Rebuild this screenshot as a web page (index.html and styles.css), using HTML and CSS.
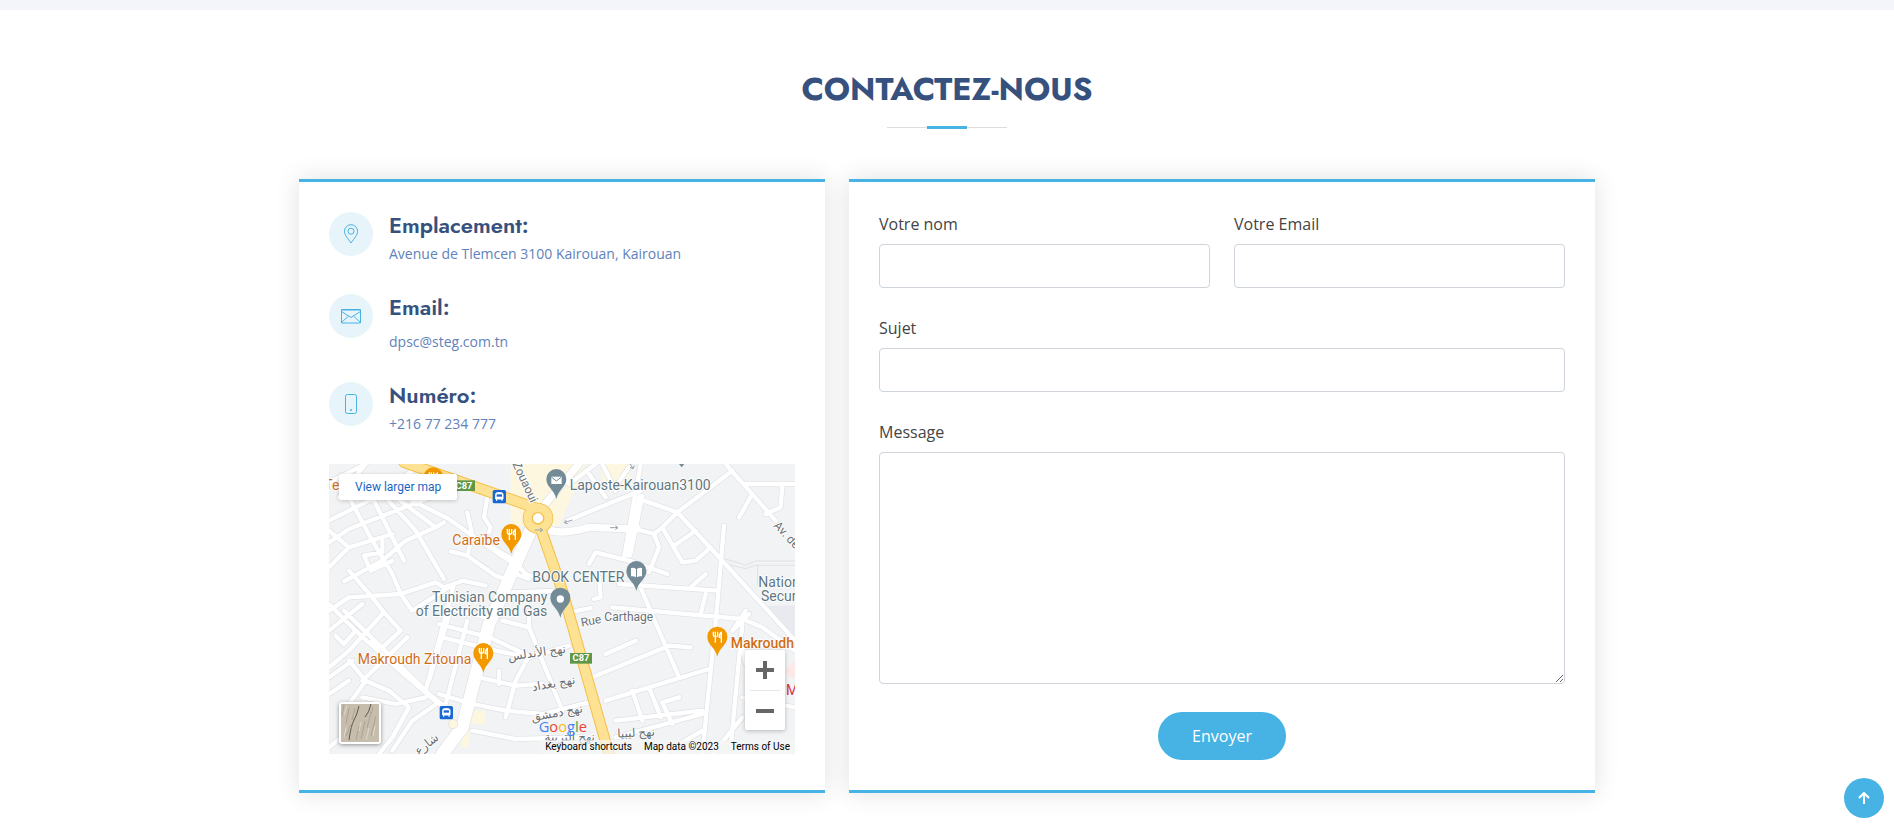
FILE: index.html
```html
<!DOCTYPE html>
<html lang="fr">
<head>
<meta charset="utf-8">
<meta name="viewport" content="width=device-width, initial-scale=1">
<title>Contactez-nous</title>
<link rel="stylesheet" href="styles.css">
</head>
<body>
<div class="band"></div>
<section class="contact">
  <header class="section-title"><h2>Contactez-nous</h2></header>
  <div class="columns">
    <div class="card info">
      <div class="info-item">
        <span class="info-icon"><svg viewBox="0 0 20 20"><path d="M10 19C7 14.500 3.500 11.500 3.500 7.200a6.500 6.500 0 0 1 13 0C16.500 11.500 13 14.500 10 19z"/><circle cx="10" cy="7.200" r="3"/></svg></span>
        <div><h3>Emplacement:</h3><p>Avenue de Tlemcen 3100 Kairouan, Kairouan</p></div>
      </div>
      <div class="info-item mail">
        <span class="info-icon"><svg viewBox="0 0 20 20"><path d="M.5 3.500h19v13.500H.5zM.5 5.500l9.500 6 9.500-6M.5 16.500l7-6.500M19.500 16.500l-7-6.500M1 4h18"/></svg></span>
        <div><h3>Email:</h3><p>dpsc@steg.com.tn</p></div>
      </div>
      <div class="info-item">
        <span class="info-icon"><svg viewBox="0 0 20 20"><rect x="4.500" y=".5" width="11" height="19" rx="2"/><circle class="dot" cx="10" cy="16" r="1"/></svg></span>
        <div><h3>Numéro:</h3><p>+216 77 234 777</p></div>
      </div>
      <div class="map">
        <svg class="map-canvas" viewBox="0 0 1398 870" preserveAspectRatio="xMidYMid slice" role="img" aria-label="Kairouan">
          <defs>
            <g id="roads">
              <path d="M110 0L30 100M0 55L110 0M0 170L120 110L250 20M0 235L60 195L200 140L330 90M60 100L130 230L190 330L215 390M130 100L225 290M170 100L260 200L345 345M200 100L320 190L345 175M250 110L360 165L430 215L415 275L500 335L530 345M0 200L60 250L190 210M0 310L60 250M45 352L160 290L230 230L320 190M105 275L125 320L190 290M160 220L160 265L105 275M0 440L60 400L215 390L320 355L345 370L375 360M60 320L130 400L165 445M0 420L80 500L190 600L330 720M45 440L300 690L350 730M0 610L60 560L165 445M0 500L100 420M80 500L45 540L20 515M165 445L215 500L150 560L130 530M0 640L70 590M100 700L200 720L290 700M60 590L110 650L180 680L240 730L190 820L150 870M110 650L60 720M235 520L100 650M330 715L250 770L190 860M0 690L60 650M0 850L60 800"/>
              <path d="M215 390L250 440L375 360L400 350L470 365M375 360L290 680M415 275L365 262M415 145L430 215L550 285L590 330L640 345M475 100L465 160L485 190L480 205M430 215L540 290M360 455L300 650M415 470L350 720M330 480L480 520L600 575M350 430L470 460M340 520L500 560L600 580L720 545M520 470L600 490L600 440M600 490L660 640L700 740M600 575L560 650L530 760M450 640L560 665L640 660M510 660V620M430 720L530 740L640 750L780 715M330 690L430 720M430 800L560 825L760 820M720 445L785 432M550 385L690 380M560 330L600 345"/>
              <path d="M715 170L860 110L935 80M935 0L885 280M945 110L1045 145L1210 20M780 30L830 100M820 0L860 80M865 60L900 10M800 0L720 60M1045 145L1180 290L1398 530M920 195L975 210L1000 190L1045 145M975 210L990 250L960 325M1000 190L1060 295L1100 290L1145 250M1035 245L1100 200M1185 185L1165 420L1120 870M1190 0L1340 170M1250 60H1398M1360 60L1355 130L1310 150M1270 90L1230 160M780 300L800 265L900 290L1015 330M870 360L1165 380M1085 370L1130 330M935 370L960 430L1050 640M850 430L1240 465L1300 490L1398 560M1130 390L1115 450M810 340L815 400L795 405M830 570L920 530M790 640L1020 545L1085 550M830 710L1140 615M860 820L1120 750M910 680L940 770M960 670L995 760M1050 700L1000 715L1030 780M860 770L1120 740M1240 480L1205 850M1250 440L1210 500L1260 450M1240 700L1398 730M1240 760L1150 870M1000 870L1120 800M1240 540L1250 600"/>
            </g>
            <path id="streets" d="M640 130L750 0M650 195Q700 215 780 190L925 195M935 100L900 270"/>
            <g id="pin"><path d="M0 55C-7 25-30 20-30-5a30 30 0 0 1 60 0C30 20 7 25 0 55z"/></g>
            <g id="fork"><use href="#pin" fill="#f29900"/><path d="M-12-20v11q0 4 4 4h5q4 0 4-4v-11M-6-20V13M12 13V-18q-6 3-6 15h6" fill="none" stroke="#fff" stroke-width="4"/></g>
            <g id="bus"><rect x="-20" y="-20" width="40" height="40" rx="5" fill="#1967d2"/><path d="M-11 7V-7q0-5 5-5H6q5 0 5 5V7zM-8 7v6M8 7v6" fill="#fff" stroke="#fff" stroke-width="3"/><path d="M-8-7H8V0H-8z" fill="#1967d2"/></g>
            <g id="route"><rect x="-33" y="-16" width="66" height="32" fill="#5f9747"/><text class="shield" text-anchor="middle" y="9">C87</text></g>
          </defs>
          <path fill="#f1f3f4" d="M0 0h1398v870H0z"/>
          <path fill="#e8eaf0" d="M1310 425h88v90z"/>
          <path fill="none" stroke="#dfe1e5" stroke-width="3" d="M1190 285l60 18 30-12h118M1190 300l60 14 30-10h118M1286 304v60"/>
          <path fill="#fef7e0" d="M545 0h225L690 185H545zM820 0h90l-20 75h-70zM415 740h55v40h-55zM395 800h30l-10 50h-20z"/>
          <path fill="#fce8e6" d="M1398 590v55l-40-20z"/>
          <use href="#roads" class="road-edge"/>
          <use href="#streets" class="street-edge"/>
          <path class="avenue-edge" d="M620 165L480 480L400 790L340 870"/>
          <use href="#roads" class="road"/>
          <use href="#streets" class="street"/>
          <path class="avenue" d="M620 165L480 480L400 790L340 870"/>
          <path class="main-edge" d="M225-5L400 55L620 132M632 185L700 380L840 870"/>
          <circle cx="627" cy="163" r="32" fill="#fff" stroke="#f5bf4b" stroke-width="28"/>
          <path class="main" d="M225-5L400 55L620 132M632 185L700 380L840 870"/>
          <circle cx="627" cy="163" r="31" fill="none" stroke="#fde293" stroke-width="25"/>
          <circle cx="627" cy="163" r="17" fill="#fff" stroke="#f5bf4b" stroke-width="4"/>
          <circle cx="372" cy="780" r="14" fill="#fef7e0" stroke="#ddd" stroke-width="2"/>
          <path class="arrow" d="M617 198h24l-8-6m8 6l-8 6M843 191h24l-8-6m8 6l-8 6M730 168l-24 8 10 3m-10-3l6-8M904 0l8 14 4-9m-4 9l-9-4"/>
          <use href="#fork" x="313" y="45"/>
          <use href="#fork" x="547" y="215"/>
          <use href="#fork" x="463" y="572"/>
          <use href="#fork" x="1165" y="523"/>
          <g fill="#738b96"><use href="#pin" x="682" y="50"/><use href="#pin" x="922" y="326"/><use href="#pin" x="694" y="406"/><path d="M1050 0h16l-8 10z"/></g>
          <path d="M667 38h31v22h-31z" fill="#fff"/><path d="M667 39l15 12 15-12" fill="none" stroke="#738b96" stroke-width="3"/>
          <path d="M906 312q9-2 15 3v25q-7-5-15-3zM939 312q-9-2-15 3v25q7-5 15-3z" fill="#fff"/>
          <circle cx="694" cy="405" r="11" fill="#fff"/>
          <use href="#bus" x="511" y="98"/><use href="#bus" x="352" y="746"/>
          <use href="#route" x="405" y="65"/><use href="#route" x="756" y="583"/>
          <g class="place food">
            <text x="-14" y="78">Te</text><text x="370" y="243">Caraïbe</text><text x="86" y="600">Makroudh Zitouna</text><text class="strong" x="1205" y="552">Makroudh</text>
          </g>
          <g class="place">
            <text x="722" y="79">Laposte-Kairouan3100</text><text x="610" y="354">BOOK CENTER</text>
            <text x="655" y="414" text-anchor="end">Tunisian Company</text><text x="655" y="456" text-anchor="end">of Electricity and Gas</text>
            <text x="1288" y="369">Nation</text><text x="1296" y="411">Secur</text>
          </g>
          <text class="place red" x="1371" y="692">M</text>
          <g class="street-name">
            <text transform="translate(550 0) rotate(65)">Zouaoui</text>
            <text transform="translate(1332 186) rotate(47)">Av. de</text>
            <text transform="translate(758 488) rotate(-11)">Rue</text><text transform="translate(826 472)">Carthage</text>
            <g text-anchor="middle">
              <text transform="translate(625 578) rotate(-8)">نهج الأندلس</text>
              <text transform="translate(676 670) rotate(-10)">نهج بغداد</text>
              <text transform="translate(686 758) rotate(-10)">نهج دمشق</text>
              <text transform="translate(722 832)">نهج التربية</text>
              <text transform="translate(922 818) rotate(-3)">نهج ليبيا</text>
              <text transform="translate(300 850) rotate(-38)">شارع</text>
            </g>
          </g>
          <text class="logo" x="629" y="803"><tspan fill="#4285f4">G</tspan><tspan fill="#ea4335">o</tspan><tspan fill="#fbbc04">o</tspan><tspan fill="#4285f4">g</tspan><tspan fill="#34a853">l</tspan><tspan fill="#ea4335">e</tspan></text>
        </svg>
        <a class="larger" href="#">View larger map</a>
        <button class="satellite" type="button" aria-label="Satellite"><svg viewBox="0 0 38 38"><path fill="#c6bdad" d="M0 0h38v38H0z"/><path d="M3 0l-2 12M8 4L5 20M30 8l-4 16M35 12l-5 20M24 17l-4 18M18 22l-3 14M10 20L5 32M14 4l-3 12M32 3l-2 7" stroke="#aea391" stroke-width="1"/><path d="M6 2l-3 9M20 18l-2 9M28 24l-3 12M34 22l-2 10M5 24l-2 9M12 17l-3 9" stroke="#dfd8cb" stroke-width="1"/><path d="M18 2q-2 9-5 14t-5 20M30 0q-2 9-6 13" fill="none" stroke="#5b564d" stroke-width="1"/></svg></button>
        <div class="zoom">
          <button type="button" aria-label="Zoom in"><svg viewBox="0 0 18 18"><path d="M7 0h4v7h7v4h-7v7H7v-7H0V7h7z"/></svg></button>
          <button type="button" aria-label="Zoom out"><svg viewBox="0 0 18 18"><path d="M0 7h18v4H0z"/></svg></button>
        </div>
        <div class="credits"><button type="button">Keyboard shortcuts</button><span>Map data ©2023</span><a href="#">Terms of Use</a></div>
      </div>
    </div>
    <form class="card form">
      <div class="field"><label for="name">Votre nom</label><input id="name" type="text"></div>
      <div class="field"><label for="email">Votre Email</label><input id="email" type="email"></div>
      <div class="field wide"><label for="subject">Sujet</label><input id="subject" type="text"></div>
      <div class="field wide"><label for="message">Message</label><textarea id="message"></textarea></div>
      <button class="send" type="submit">Envoyer</button>
    </form>
  </div>
</section>
<a class="to-top" href="#" aria-label="Haut de page"><svg viewBox="0 0 16 16"><path d="M8 14V3M3 8l5-5 5 5"/></svg></a>
</body>
</html>
```
FILE: styles.css
```css
* { box-sizing: border-box; }
body { margin: 0; background: #fff; color: #444; font: 16px/24px "Open Sans", sans-serif; }
a { text-decoration: none; }
button { border: 0; padding: 0; cursor: pointer; font-family: inherit; }
.band { height: 10px; background: #f3f5fa; }
.contact { max-width: 1296px; margin: 0 auto; padding: 60px 0 32px; }
.section-title { text-align: center; padding-bottom: 30px; }
.section-title h2 {
  margin: 0 0 20px; padding-bottom: 20px; position: relative;
  font: 700 32px/39px Jost, Lato, sans-serif; text-transform: uppercase; color: #37517e;
}
.section-title h2::before, .section-title h2::after { content: ""; position: absolute; left: 50%; transform: translateX(-50%); }
.section-title h2::before { width: 120px; height: 1px; bottom: 1px; background: #ddd; }
.section-title h2::after { width: 40px; height: 3px; bottom: 0; background: #47b2e4; }
.columns { display: grid; grid-template-columns: 526fr 746fr; gap: 24px; }
.card { border-top: 3px solid #47b2e4; border-bottom: 3px solid #47b2e4; padding: 30px; box-shadow: 0 0 24px rgba(0, 0, 0, .12); }
.info-item { display: flex; gap: 16px; height: 82px; }
.info-item.mail { height: 88px; }
.info-icon { width: 44px; height: 44px; border-radius: 50%; background: #e7f5fb; display: grid; place-items: center; flex: none; }
.info-icon svg { width: 20px; height: 20px; fill: none; stroke: #47b2e4; stroke-width: 1; }
.info-icon .dot { fill: #47b2e4; stroke: none; }
.info h3 { margin: 0 0 4px; font: 600 22px/27px Jost, Lato, sans-serif; color: #37517e; }
.info p { margin: 0; font-size: 14px; line-height: 21px; color: #6182ba; }
.mail p { padding-top: 6px; }
.map { position: relative; height: 290px; overflow: hidden; font-family: Roboto, sans-serif; }
.map-canvas { display: block; width: 100%; height: 100%; }
.road-edge, .road, .avenue-edge, .avenue, .street-edge, .street, .main-edge, .main { fill: none; stroke-linecap: round; stroke-linejoin: round; }
.road-edge { stroke: #dfe1e5; stroke-width: 17; }
.road { stroke: #fff; stroke-width: 13; }
.avenue-edge { stroke: #dfe1e5; stroke-width: 42; }
.avenue { stroke: #fff; stroke-width: 38; }
.street-edge { stroke: #dfe1e5; stroke-width: 26; }
.street { stroke: #fff; stroke-width: 22; }
.main-edge { stroke: #f5bf4b; stroke-width: 34; }
.main { stroke: #fde293; stroke-width: 28; }
.arrow { fill: none; stroke: #9aa0ac; stroke-width: 3; }
.place { font: 42px Roboto, sans-serif; fill: #5f7680; }
.food { fill: #cf6d17; }
.strong { font-weight: 500; }
.red { fill: #d93043; }
.place text, .street-name text { paint-order: stroke; stroke: #fff; stroke-width: 5px; stroke-linejoin: round; }
.street-name { font: 36px Roboto, "DejaVu Sans", sans-serif; fill: #6b7075; }
.shield { font: 700 28px Roboto, sans-serif; fill: #fff; }
.logo { font: 500 44px "Open Sans", sans-serif; }
.larger {
  position: absolute; left: 10px; top: 10px; padding: 0 16px; background: #fff; color: #1a66c4;
  font-size: 12px; line-height: 26px; box-shadow: 0 1px 4px rgba(0, 0, 0, .2); border-radius: 2px;
}
.satellite { position: absolute; left: 10px; bottom: 10px; width: 42px; height: 42px; border: 2px solid #fff; border-radius: 3px; box-shadow: 0 1px 4px rgba(0, 0, 0, .4); }
.satellite svg { display: block; width: 100%; height: 100%; }
.zoom { position: absolute; right: 10px; bottom: 24px; width: 40px; background: #fff; border-radius: 2px; box-shadow: 0 1px 4px rgba(0, 0, 0, .25); display: grid; padding: 0 5px; }
.zoom button { height: 40px; background: none; display: grid; place-items: center; }
.zoom button + button { border-top: 1px solid #e6e6e6; }
.zoom svg { width: 18px; height: 18px; fill: #666; }
.credits {
  position: absolute; right: 0; bottom: 0; padding: 0 5px; display: flex; gap: 12px;
  font-size: 10px; line-height: 14px; color: #000; background: rgba(245, 245, 245, .7);
}
.credits button { background: none; font-size: 10px; line-height: 14px; color: #000; }
.credits a { color: #000; }
.form { display: grid; grid-template-columns: 1fr 1fr; gap: 28px 24px; align-content: start; }
.field { display: flex; flex-direction: column; gap: 8px; }
.wide { grid-column: 1 / -1; }
.field input, .field textarea { width: 100%; height: 44px; margin: 0; padding: 6px 12px; border: 1px solid #ced4da; border-radius: 4px; background: #fff; font: inherit; font-size: 14px; }
.field textarea { height: 232px; resize: vertical; }
.send { grid-column: 1 / -1; justify-self: center; padding: 12px 34px; background: #47b2e4; color: #fff; font-size: 16px; line-height: 24px; border-radius: 24px; }
.to-top { position: fixed; right: 10px; bottom: 7px; width: 40px; height: 40px; border-radius: 50%; background: #47b2e4; display: grid; place-items: center; }
.to-top svg { width: 16px; height: 16px; fill: none; stroke: #fff; stroke-width: 2; }
```
